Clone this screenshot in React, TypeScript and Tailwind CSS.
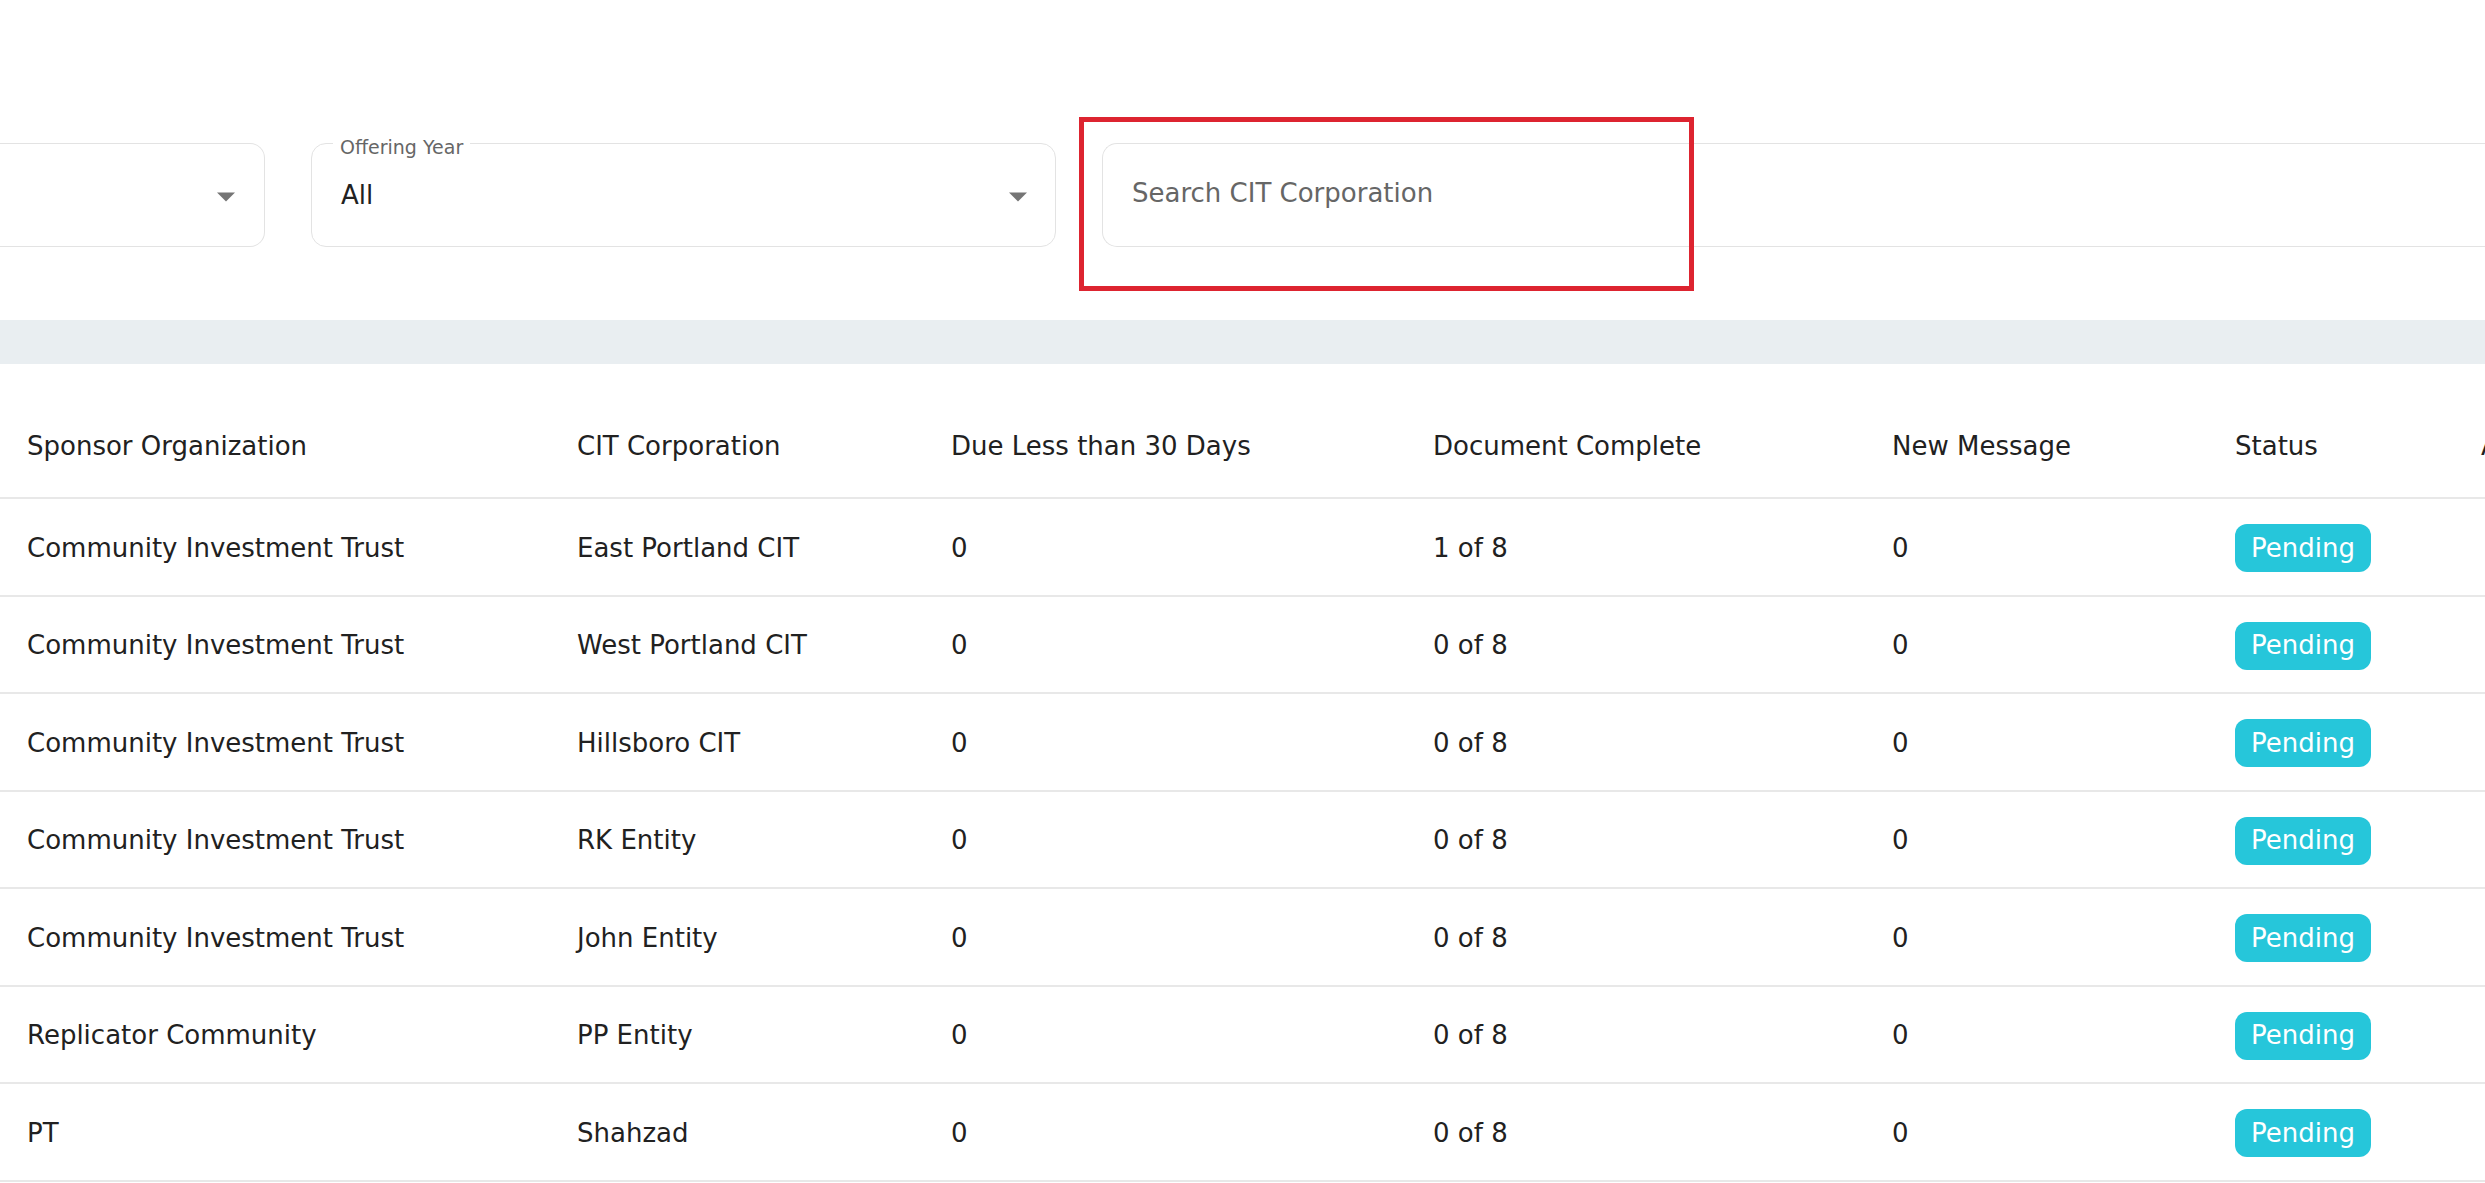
import React from 'react'

const rows = [
  { sponsor: 'Community Investment Trust', corp: 'East Portland CIT', due: '0', docs: '1 of 8', msgs: '0' },
  { sponsor: 'Community Investment Trust', corp: 'West Portland CIT', due: '0', docs: '0 of 8', msgs: '0' },
  { sponsor: 'Community Investment Trust', corp: 'Hillsboro CIT', due: '0', docs: '0 of 8', msgs: '0' },
  { sponsor: 'Community Investment Trust', corp: 'RK Entity', due: '0', docs: '0 of 8', msgs: '0' },
  { sponsor: 'Community Investment Trust', corp: 'John Entity', due: '0', docs: '0 of 8', msgs: '0' },
  { sponsor: 'Replicator Community', corp: 'PP Entity', due: '0', docs: '0 of 8', msgs: '0' },
  { sponsor: 'PT', corp: 'Shahzad', due: '0', docs: '0 of 8', msgs: '0' },
]

const headers = ['Sponsor Organization', 'CIT Corporation', 'Due Less than 30 Days', 'Document Complete', 'New Message', 'Status', 'Action']

function DropArrow() {
  return (
    <svg width="18" height="10" viewBox="0 0 10 5" className="shrink-0 mt-[3px]">
      <path d="M0 0l5 5 5-5z" fill="#757575" />
    </svg>
  )
}

export default function App() {
  return (
    <div className="relative h-[1183px] w-full overflow-hidden bg-white font-['DejaVu_Sans',sans-serif] text-[#212121]">
      {/* Filters */}
      <div className="flex gap-[46px] pt-[143px]">
        <div className="flex h-[104px] w-[265px] shrink-0 items-center justify-end rounded-r-[15px] border-[1.5px] border-l-0 border-[#e3e3e3] pr-[29px]">
          <DropArrow />
        </div>

        <div className="relative flex h-[104px] w-[745px] shrink-0 items-center justify-between rounded-[15px] border-[1.5px] border-[#e3e3e3] pl-[29px] pr-[28px]">
          <span className="absolute -top-[6px] left-[21px] bg-white px-[7px] text-[19px] leading-none text-[#666]">
            Offering Year
          </span>
          <span className="text-[26px]">All</span>
          <DropArrow />
        </div>

        <div className="flex h-[104px] flex-1 items-center rounded-l-[15px] border-[1.5px] border-r-0 border-[#e3e3e3] pb-[3px] pl-[29px]">
          <input
            className="w-full bg-transparent text-[26px] text-[#212121] outline-none placeholder:text-[#666]"
            placeholder="Search CIT Corporation"
          />
        </div>
      </div>

      {/* Annotation */}
      <div className="absolute left-[1079px] top-[117px] h-[174px] w-[615px] border-[5px] border-[#dd2430]" />

      {/* Band */}
      <div className="mt-[73px] h-[44px] bg-[#e9eef1]" />

      {/* Table */}
      <div className="grid h-[135px] grid-cols-[550px_374px_482px_459px_343px_246px_200px] items-end border-b-2 border-[#e8e8e8] pb-[31px] pl-[27px] text-[26px] leading-[39px]">
        {headers.map((h) => (
          <div key={h} className="whitespace-nowrap">{h}</div>
        ))}
      </div>
      {rows.map((r, i) => (
        <div
          key={i}
          className="grid h-[97.5px] grid-cols-[550px_374px_482px_459px_343px_246px_200px] items-center border-b-2 border-[#e8e8e8] pl-[27px] pt-[3px] text-[26px] leading-[39px]"
        >
          <div className="whitespace-nowrap">{r.sponsor}</div>
          <div className="whitespace-nowrap">{r.corp}</div>
          <div>{r.due}</div>
          <div>{r.docs}</div>
          <div>{r.msgs}</div>
          <div>
            <span className="inline-flex h-[48px] items-center rounded-[12px] bg-[#26c6da] px-[16px] text-white">
              Pending
            </span>
          </div>
          <div />
        </div>
      ))}
    </div>
  )
}
